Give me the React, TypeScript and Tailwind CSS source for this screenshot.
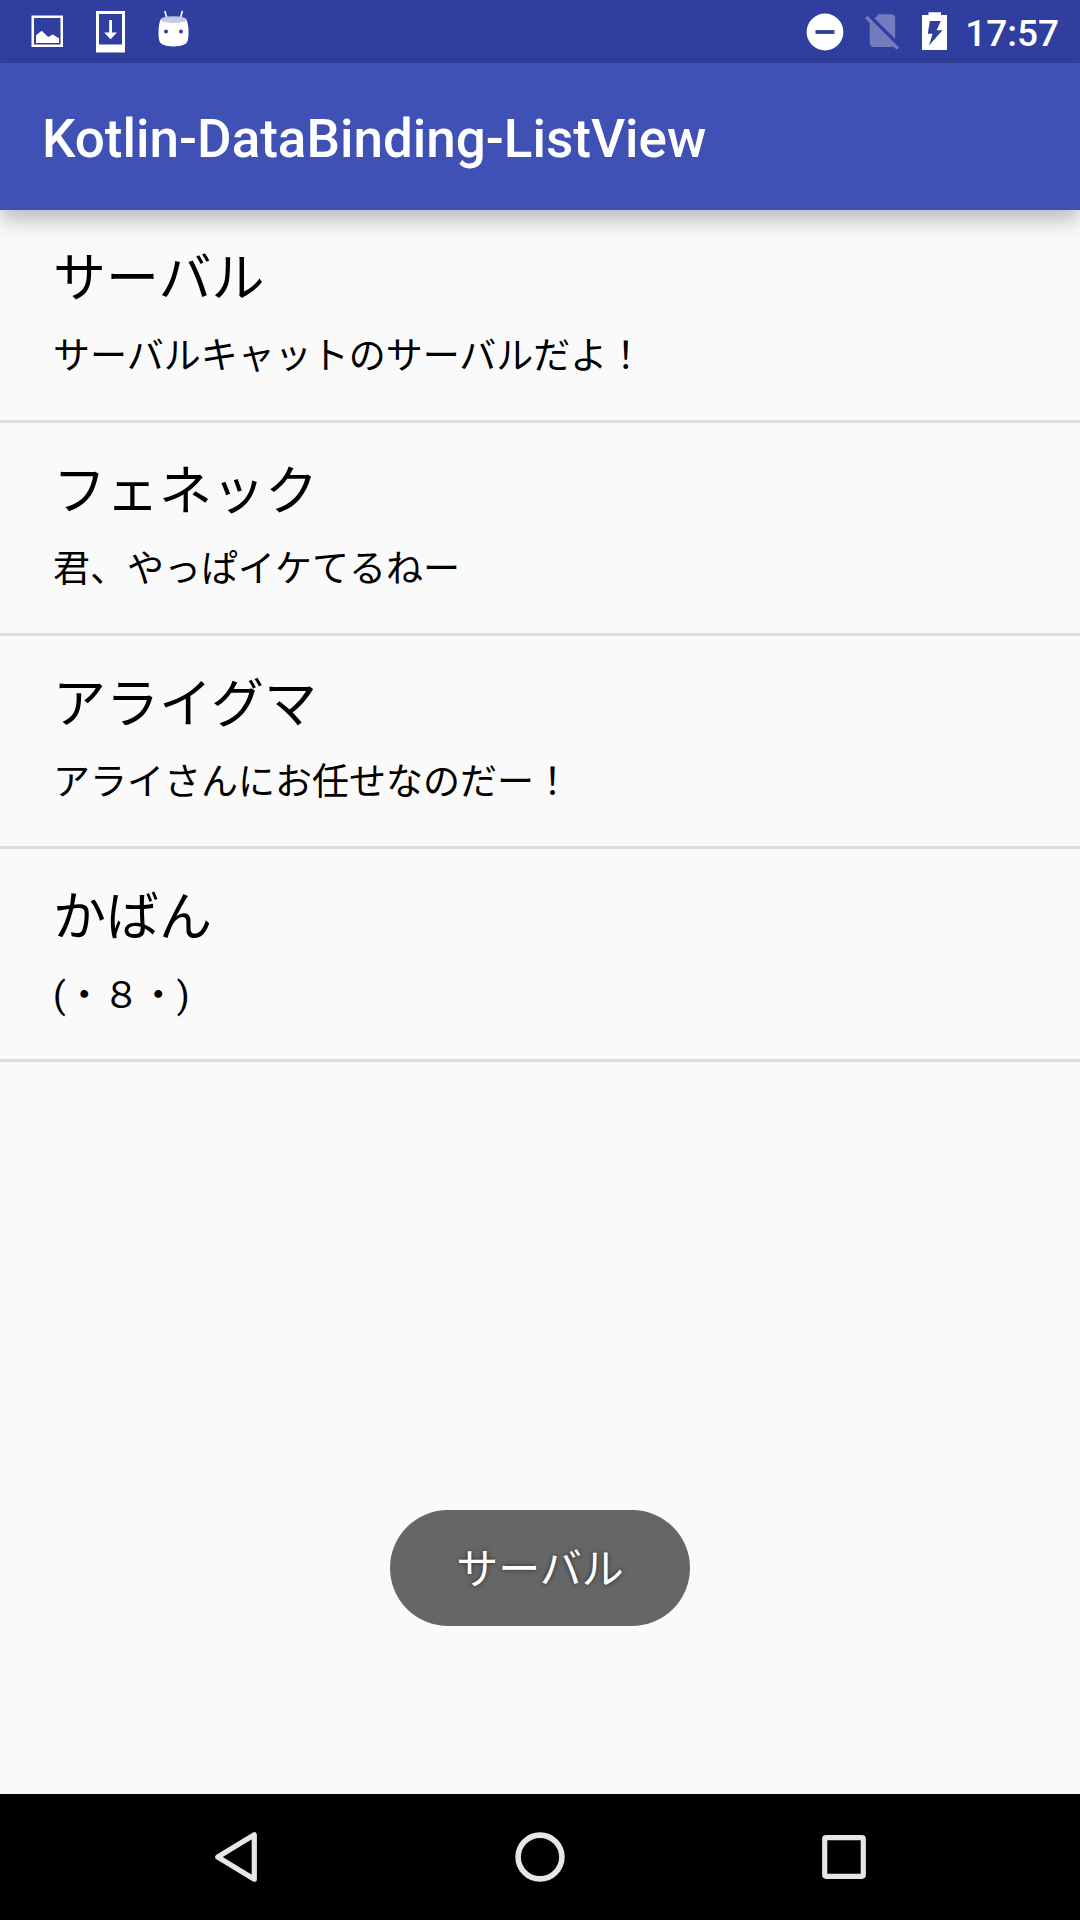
interface Friend {
  name: string;
  message: string;
}

const FRIENDS: Friend[] = [
  { name: "サーバル", message: "サーバルキャットのサーバルだよ！" },
  { name: "フェネック", message: "君、やっぱイケてるねー" },
  { name: "アライグマ", message: "アライさんにお任せなのだー！" },
  { name: "かばん", message: "(・８・)" },
];

function StatusBar() {
  return (
    <div className="flex h-[63px] shrink-0 items-center justify-between bg-[#303f9f] pl-4 pr-[21px]">
      {/* Notifications */}
      <div className="flex">
        <svg className="h-[63px] w-[63px]" viewBox="16 0 63 63" fill="white">
          <path fillRule="evenodd" d="M31.5 15.5H63V47H31.5Z M34 18V44.5H60.5V18Z" />
          <path d="M36 43V35.2L41.7 30.8L48.2 37L52.8 34.6L59 38.2V43Z" />
        </svg>
        <svg className="h-[63px] w-[63px]" viewBox="79 0 63 63" fill="white">
          <path fillRule="evenodd" d="M96 11H125V52.5H96Z M99 14V44.5H122V14Z" />
          <path d="M109.2 20H112V32.5H117L110.6 39.2L104.2 32.5H109.2Z" />
        </svg>
        <svg className="h-[63px] w-[63px]" viewBox="142 0 63 63" fill="white">
          <path d="M165 11.5L167 19M182.2 11.5L180.2 19" stroke="white" strokeWidth="1.6" strokeLinecap="round" />
          <path d="M160.5 19.5C158.4 25 158 33 159 39.5C159.8 44.5 165 46.4 173.5 46.4C182 46.4 187.2 44.5 188 39.5C189 33 188.6 25 186.5 19.5Z" />
          <ellipse cx="173.5" cy="19.7" rx="12.8" ry="3.4" fill="#c5c9e6" />
          <circle cx="166" cy="31.5" r="2" fill="#303f9f" />
          <circle cx="181" cy="31.5" r="2" fill="#303f9f" />
        </svg>
      </div>

      {/* System icons */}
      <div className="flex items-center">
        <svg className="h-[63px] w-[50px]" viewBox="800 0 50 63">
          <circle cx="825" cy="32" r="18.4" fill="white" />
          <path d="M815.5 32H834.5" stroke="#303f9f" strokeWidth="3.8" />
        </svg>
        <svg className="h-[63px] w-[63px]" viewBox="850 0 63 63">
          <path
            transform="translate(860.6 8.7) scale(1.82)"
            d="M18.99 5c0-1.1-.89-2-1.99-2h-7L7.66 5.34 19 16.68 18.99 5zM3.65 3.88L2.38 5.15 5 7.77V19c0 1.1.9 2 2 2h10.01c.35 0 .67-.1.96-.26l1.88 1.88 1.27-1.27L3.65 3.88z"
            fill="white"
            fillOpacity="0.32"
          />
        </svg>
        <svg className="h-[63px] w-[52px]" viewBox="913 0 52 63">
          <path
            fillRule="evenodd"
            fill="white"
            d="M922 15H928.5V12.2H941V15H947V50H922Z M929.8 21L927.8 33.8H932.6L929 45.5L942.5 30.2H936.6L940.8 21Z"
          />
        </svg>
        <span className="pt-[3px] font-['Roboto'] text-[37px] font-medium leading-none text-white">17:57</span>
      </div>
    </div>
  );
}

function FriendRow({ name, message }: Friend) {
  return (
    <li className="h-[213px] border-b-[3px] border-[#dcdcdc] pl-[53px] pt-[38px] text-black">
      <p className="text-[53px] leading-[62px]">{name}</p>
      <p className="mt-[25px] text-[37px] leading-[44px]">{message}</p>
    </li>
  );
}

function NavigationBar() {
  return (
    <nav className="flex h-[126px] shrink-0 items-center justify-center gap-[228px] bg-black">
      <svg className="h-[76px] w-[76px]" viewBox="198 1819 76 76" fill="none">
        <path d="M254.3 1834.8V1879.2L217.7 1857Z" stroke="#e6e6e6" strokeWidth="5.2" strokeLinejoin="round" />
      </svg>
      <svg className="h-[76px] w-[76px]" viewBox="502 1819 76 76" fill="none">
        <circle cx="540" cy="1857" r="21.9" stroke="#e6e6e6" strokeWidth="5.6" />
      </svg>
      <svg className="h-[76px] w-[76px]" viewBox="806 1819 76 76" fill="none">
        <rect x="824.7" y="1837.7" width="38.6" height="38.6" rx="1.5" stroke="#e6e6e6" strokeWidth="5.2" />
      </svg>
    </nav>
  );
}

export default function App() {
  return (
    <div className="relative flex h-[1920px] w-[1080px] flex-col overflow-hidden bg-[#fafafa] font-['Roboto','Noto_Sans_CJK_JP',sans-serif]">
      <StatusBar />
      <header className="z-10 flex h-[147px] shrink-0 items-center bg-[#3f51b5] pl-[42px] pt-1.5 shadow-[0_10px_20px_rgba(0,0,0,0.25)]">
        <h1 className="text-[53px] font-medium leading-none text-white">Kotlin-DataBinding-ListView</h1>
      </header>
      <ul className="flex-1">
        {FRIENDS.map((friend) => (
          <FriendRow key={friend.name} {...friend} />
        ))}
      </ul>
      <NavigationBar />

      {/* Toast */}
      <div className="absolute left-1/2 top-[1510px] flex h-[116px] w-[300px] -translate-x-1/2 items-center justify-center rounded-full bg-[#666666] pt-1">
        <span className="text-[42px] leading-none text-white [text-shadow:0_0_5px_rgba(0,0,0,0.6)]">サーバル</span>
      </div>
    </div>
  );
}
